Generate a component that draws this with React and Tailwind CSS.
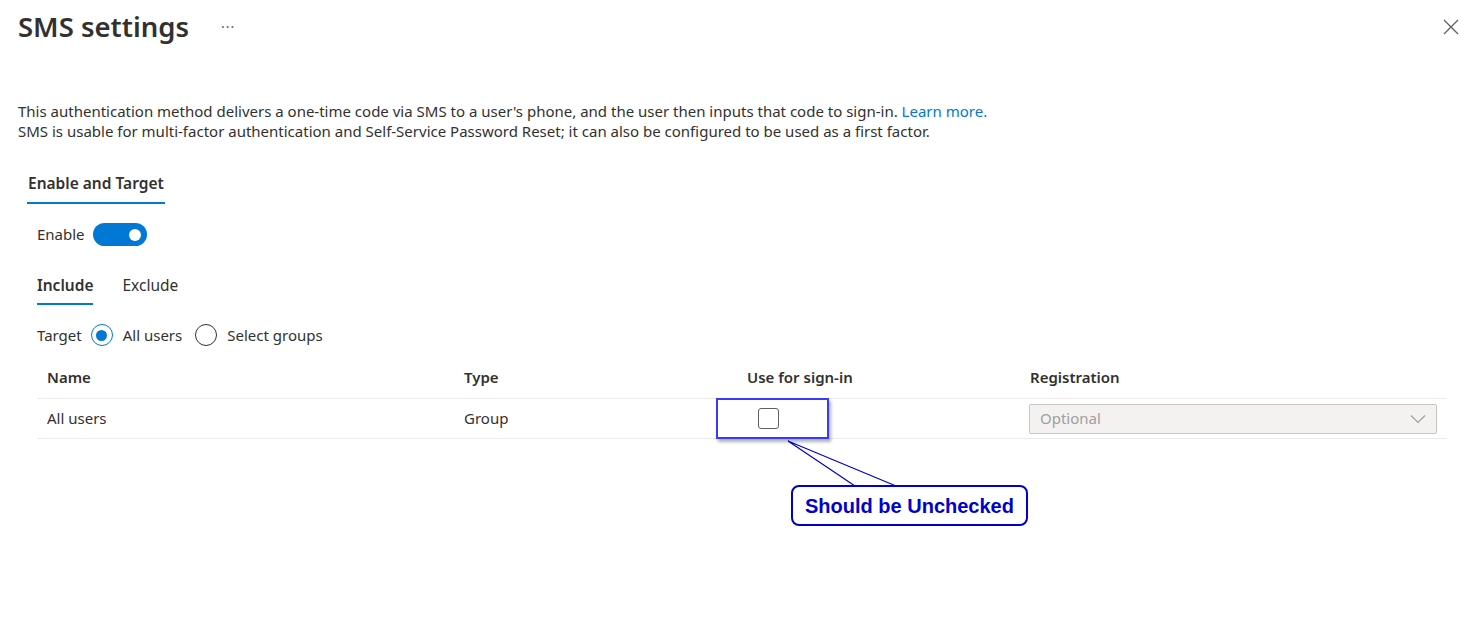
import { useState } from "react";

const font = { fontFamily: '"Segoe UI", "Noto Sans", sans-serif' };

const ToggleSwitch = ({ on, onChange }) => (
  <button
    onClick={() => onChange(!on)}
    className={`flex items-center w-[54px] h-[23px] rounded-full px-[6px] ${
      on ? "bg-[#0078d4] justify-end" : "bg-white border border-[#605e5c] justify-start"
    }`}
  >
    <span className={`w-[12px] h-[12px] rounded-full ${on ? "bg-white" : "bg-[#605e5c]"}`} />
  </button>
);

const Radio = ({ checked }) => (
  <span
    className={`flex items-center justify-center w-[22px] h-[22px] rounded-full border ${
      checked ? "border-[#0078d4]" : "border-[#323130]"
    }`}
  >
    {checked && <span className="w-[11px] h-[11px] rounded-full bg-[#0078d4]" />}
  </span>
);

export default function App() {
  const [enabled, setEnabled] = useState(true);
  const [tab, setTab] = useState("include");

  return (
    <div className="relative w-full h-[618px] bg-white text-[#323130] overflow-hidden text-[15px]" style={font}>
      {/* header */}
      <div className="flex items-center h-[54px] pl-[18px] pr-[22px]">
        <h1 className="text-[27.5px] font-semibold leading-none pb-[1px]">SMS settings</h1>
        <span className="ml-[32px] text-[14px] text-[#605e5c] tracking-[1px] -mt-[2px]">···</span>
        <button className="ml-auto text-[#605e5c]">
          <svg width="16" height="16" viewBox="0 0 16 16" fill="none" stroke="currentColor" strokeWidth="1.3">
            <path d="M1 1l14 14M15 1L1 15" />
          </svg>
        </button>
      </div>

      {/* description */}
      <div className="pl-[18px] pt-[47px] leading-[20px]">
        <p>
          This authentication method delivers a one-time code via SMS to a user's phone, and the user then inputs
          that code to sign-in. <a className="text-[#0078d4]">Learn more.</a>
        </p>
        <p>
          SMS is usable for multi-factor authentication and Self-Service Password Reset; it can also be configured
          to be used as a first factor.
        </p>
      </div>

      {/* main tab */}
      <div className="pl-[27px] pt-[31px]">
        <div className="inline-flex flex-col">
          <span className="text-[15.5px] font-semibold leading-[20px] px-[1px]">Enable and Target</span>
          <span className="mt-[9px] h-[2px] bg-[#0078d4]" />
        </div>
      </div>

      <div className="pl-[37px] pr-[34px]">
        {/* enable */}
        <div className="flex items-center gap-[8px] mt-[18px] h-[25px]">
          <span>Enable</span>
          <ToggleSwitch on={enabled} onChange={setEnabled} />
        </div>

        {/* include / exclude */}
        <div className="flex gap-[29px] mt-[28px]">
          {["include", "exclude"].map((t) => (
            <button key={t} onClick={() => setTab(t)} className="flex flex-col">
              <span className={`text-[15.5px] leading-[20px] ${tab === t ? "font-semibold" : ""}`}>
                {t === "include" ? "Include" : "Exclude"}
              </span>
              <span className={`mt-[8px] h-[2px] ${tab === t ? "bg-[#0078d4]" : "bg-transparent"}`} />
            </button>
          ))}
        </div>

        {/* target */}
        <div className="flex items-center mt-[18px] h-[24px]">
          <span>Target</span>
          <span className="ml-[9px]"><Radio checked /></span>
          <span className="ml-[10px]">All users</span>
          <span className="ml-[13px]"><Radio /></span>
          <span className="ml-[10px]">Select groups</span>
        </div>

        {/* table */}
        <div className="mt-[9px]">
          <div className="grid grid-cols-[417px_283px_283px_1fr] h-[43px] items-center font-semibold border-b border-[#edebe9]">
            <span className="pl-[10px]">Name</span>
            <span className="pl-[10px]">Type</span>
            <span className="pl-[10px]">Use for sign-in</span>
            <span className="pl-[10px]">Registration</span>
          </div>
          <div className="grid grid-cols-[417px_283px_283px_1fr] h-[40px] items-center border-b border-[#edebe9]">
            <span className="pl-[10px]">All users</span>
            <span className="pl-[10px]">Group</span>
            <div className="pl-[21px] flex items-center">
              <span className="w-[21px] h-[21px] shrink-0 rounded-[3px] border border-[#605e5c] bg-white" />
            </div>
            <div className="pl-[9px] pr-[10px]">
              <div className="flex items-center h-[30px] bg-[#f3f2f1] border border-[#c8c6c4] rounded-[2px] pl-[10px] pr-[10px] text-[#a19f9d]">
                <span>Optional</span>
                <svg className="ml-auto" width="16" height="10" viewBox="0 0 16 10" fill="none" stroke="#a19f9d" strokeWidth="1.2">
                  <path d="M1 1.5l7 7 7-7" />
                </svg>
              </div>
            </div>
          </div>
        </div>
      </div>

      {/* annotation overlay */}
      <div className="absolute left-[716px] top-[398px] w-[113px] h-[41px] border-2 border-[#3a3aff] shadow-[2px_3px_3px_rgba(0,0,0,0.3)]" />
      <svg className="absolute left-0 top-0 pointer-events-none" width="1481" height="618">
        <path d="M855 486 L788 441 L896 486" fill="none" stroke="#0000cc" strokeWidth="1.2" />
      </svg>
      <div
        className="absolute left-[791px] top-[485px] w-[237px] h-[41px] flex items-center justify-center rounded-[8px] border-2 border-[#0000cc] bg-white text-[#0000cc] text-[20px] font-bold"
        style={{ fontFamily: '"Liberation Sans", Arial, sans-serif' }}
      >
        Should be Unchecked
      </div>
    </div>
  );
}
